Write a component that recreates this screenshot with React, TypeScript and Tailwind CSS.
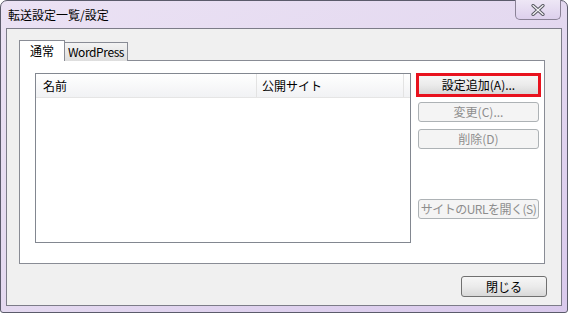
const font = {
  fontFamily: '"Noto Sans CJK JP", "Noto Sans", sans-serif',
};

function DialogButton({
  label,
  disabled,
  className = "",
}: {
  label: string;
  disabled?: boolean;
  className?: string;
}) {
  return (
    <div
      className={`flex items-center justify-center whitespace-nowrap rounded-[3px] border text-[12px] leading-none ${
        disabled
          ? "border-[#adb2b5] bg-[#f4f4f4] text-[#8d8d8d]"
          : "border-[#707070] bg-gradient-to-b from-[#f6f6f6] via-[#ebebeb] to-[#d8d8d8] text-black"
      } ${className}`}
    >
      {label}
    </div>
  );
}

export default function App() {
  return (
    <div className="h-[314px] w-[569px] bg-white" style={font}>
      <div className="relative flex h-[313px] w-[568px] flex-col rounded-t-[7px] rounded-b-[3px] border border-[#5b5b6b] bg-gradient-to-br from-[#ebe2f4] via-[#e4d9f0] to-[#d9c9ec] px-[5px] pb-[6px]">
        {/* title bar */}
        <div className="flex h-[27px] items-center pl-[2px] text-[12px] text-black">
          転送設定一覧/設定
        </div>
        <div className="absolute right-[6px] top-[-1px] flex h-[20px] w-[46px] items-center justify-center rounded-b-[5px] border border-t-0 border-[#8a8296] bg-gradient-to-b from-[#eee7f6] to-[#ddd0ec]">
          <svg width="14" height="12" viewBox="0 0 14 12">
            <path
              d="M2 1.5 L12 10.5 M12 1.5 L2 10.5"
              stroke="#55555f"
              strokeWidth="3.2"
              strokeLinecap="round"
            />
            <path
              d="M2 1.5 L12 10.5 M12 1.5 L2 10.5"
              stroke="#f4f4f6"
              strokeWidth="1.3"
              strokeLinecap="round"
            />
          </svg>
        </div>

        {/* client area */}
        <div className="flex flex-1 flex-col border border-[#7c7c88] bg-[#f0f0f0] pl-[12px] pt-[11px]">
          {/* tabs */}
          <div className="relative z-10 flex h-[21px] items-end">
            <div className="flex h-[21px] w-[46px] items-start justify-center border border-b-0 border-[#898c95] bg-white pt-[2px] text-[12px] leading-none text-black">
              <span className="mt-[2px]">通常</span>
            </div>
            <div className="flex h-[19px] w-[63px] items-center justify-center border border-b-0 border-l-0 border-[#898c95] bg-gradient-to-b from-[#f3f3f3] to-[#dedede] text-[12px] leading-none tracking-[-0.4px] text-black">
              WordPress
            </div>
          </div>
          {/* panel */}
          <div className="mt-[-1px] flex h-[204px] w-[526px] border border-[#898c95] bg-white pl-[15px] pt-[12px]">
            {/* list */}
            <div className="flex h-[170px] w-[376px] flex-col border border-[#828790] bg-white">
              <div className="flex h-[24px] border-b border-[#e5e5e5] bg-gradient-to-b from-white to-[#f1f2f4] text-[12px] text-black">
                <div className="flex w-[221px] items-center border-r border-[#e3e3e3] pl-[7px]">
                  名前
                </div>
                <div className="flex flex-1 items-center pl-[5px]">公開サイト</div>
                <div className="w-[7px] border-l border-[#e3e3e3]" />
              </div>
            </div>
            {/* buttons */}
            <div className="ml-[5px] flex h-[146px] w-[125px] flex-col">
              <div className="h-[24px] w-[125px] border-[3px] border-[#e8121e]">
                <DialogButton
                  label="設定追加(A)..."
                  className="h-full rounded-none border-0"
                />
              </div>
              <DialogButton
                label="変更(C)..."
                disabled
                className="mx-[2px] mt-[5px] h-[20px]"
              />
              <DialogButton
                label="削除(D)"
                disabled
                className="mx-[2px] mt-[7px] h-[20px]"
              />
              <div className="flex-1" />
              <DialogButton
                label="サイトのURLを開く(S)"
                disabled
                className="mx-[2px] h-[20px] tracking-[-0.5px]"
              />
            </div>
          </div>
          {/* footer */}
          <div className="mt-[12px] flex justify-end pr-[14px]">
            <DialogButton label="閉じる" className="h-[21px] w-[86px]" />
          </div>
        </div>
      </div>
    </div>
  );
}
